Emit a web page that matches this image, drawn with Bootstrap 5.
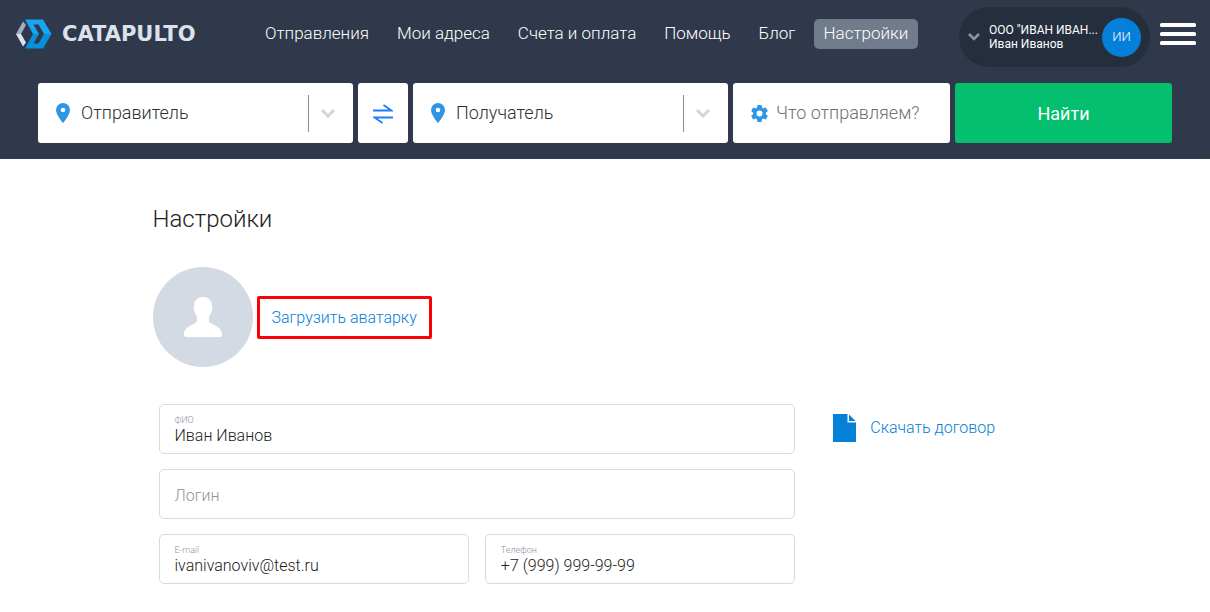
<!DOCTYPE html>
<html lang="ru">
<head>
<meta charset="utf-8">
<meta name="viewport" content="width=device-width, initial-scale=1">
<title>Настройки — Catapulto</title>
<link href="https://cdn.jsdelivr.net/npm/bootstrap@5.3.0/dist/css/bootstrap.min.css" rel="stylesheet">
<style>
  body { font-family: Roboto, "Noto Sans", sans-serif; font-weight: 300; color: #212121; background: #fff; }
  a { text-decoration: none; color: #0480d8; }
  .site-header { background: #2f394b; padding-bottom: 16px; }
  .top-bar { padding: 7px 14px 0 16px; min-height: 67px; }
  .brand { color: #dce2ec; font: 700 21px/24px "DejaVu Sans", sans-serif; gap: 10px; width: 191px; height: 53px; }
  .main-menu { gap: 8px; margin-left: 48px; height: 53px; }
  .main-menu .nav-link { color: #fff; font-size: 17px; line-height: 20px; padding: 4px 10px 6px; border-radius: 5px; white-space: nowrap; font-weight: 300; }
  .main-menu .nav-link.active { background: #707b8b; }
  .profile { background: #252e3d; color: #fff; height: 60px; border-radius: 30px; gap: 9px; padding: 0 9px; width: 191px; }
  .profile-name { font-size: 12px; line-height: 14px; font-weight: 400; min-width: 0; }
  .initials { background: #0480d8; width: 39px; height: 39px; border-radius: 50%; font-size: 13px; font-weight: 300; }
  .burger { width: 36px; height: 54px; margin-left: 10px; }
  .search-row { display: grid; grid-template-columns: minmax(0, 315fr) 50px minmax(0, 315fr) minmax(0, 217fr) minmax(0, 217fr); gap: 5px; margin: 16px 38px 0; }
  .search-box { background: #fff; height: 60px; border-radius: 3px; padding-left: 18px; gap: 11px; }
  .search-box input { font-size: 18px; line-height: 24px; font-weight: 300; border: 0; outline: 0; width: 0; min-width: 0; background: none; padding: 0; color: #212121; }
  .search-box input::placeholder { color: #303030; opacity: 1; }
  .search-box .parcel::placeholder { color: #707070; }
  .search-box.goods { gap: 8px; }
  .toggle-list { border: 0; border-left: 1px solid #8c8c8c; width: 45px; height: 37px; padding-left: 12px; }
  .swap { background: #fff; border-radius: 3px; }
  .find { background: #04bf6e; color: #fff; border-radius: 3px; font-size: 18px; }
  .page-body { max-width: 905px; margin: 0 auto; padding-top: 44px; }
  .page-title { font-size: 24px; line-height: 32px; font-weight: 300; }
  .avatar { width: 100px; height: 100px; border-radius: 50%; background: #d4dae4; }
  .upload { border: 3px solid #fb0007; border-radius: 2px; padding: 8px 12px; margin-left: 4px; font-size: 16px; line-height: 21px; }
  .settings { display: grid; grid-template-columns: minmax(0, 636fr) minmax(0, 224fr); gap: 38px; margin: 37px 0 28px; padding-left: 6px; }
  .fields { display: grid; grid-template-columns: 1fr 1fr; gap: 15px 16px; }
  .field-box { border: 1px solid #d4dae6; border-radius: 5px; height: 50px; padding: 10px 15px 0 15px; }
  .field-box label { display: block; font-size: 9px; line-height: 11px; color: #8d94a0; }
  .field-box input { display: block; width: 100%; border: 0; outline: 0; padding: 0; font-size: 16px; line-height: 20px; height: 20px; font-weight: 300; color: #212121; }
  .field-box input::placeholder { color: #8d94a0; opacity: 1; }
  .wide { grid-column: 1 / -1; }
  .lone { padding-top: 16px; }
  .contract { height: 48px; gap: 14px; font-size: 16px; }
</style>
</head>
<body>
<header class="site-header">
  <div class="top-bar d-flex align-items-start">
    <a class="brand d-flex align-items-center" href="#">
      <svg class="flex-shrink-0" width="36" height="30" viewBox="0 0 36 30" aria-hidden="true">
        <path d="M7 2.500L10 6 5 15H0z" fill="#a3adbd"/><path d="M0 15h5l5 8.500L7 27.500z" fill="#dce2ec"/>
        <path d="M9 .5h18L35.500 15H28L22.500 5.500h-5L23 15h-6z" fill="#16a5f2"/>
        <path d="M9 29.500h18L35.500 15H28l-5.500 9.500h-5L23 15h-6z" fill="#078fdb"/>
      </svg>
      <span>CATAPULTO</span>
    </a>
    <nav class="main-menu nav flex-nowrap align-items-center" aria-label="Главное меню">
      <a class="nav-link" href="#">Отправления</a>
      <a class="nav-link" href="#">Мои адреса</a>
      <a class="nav-link" href="#">Счета и оплата</a>
      <a class="nav-link" href="#">Помощь</a>
      <a class="nav-link" href="#">Блог</a>
      <a class="nav-link active" aria-current="page" href="#">Настройки</a>
    </nav>
    <button class="profile btn border-0 d-flex align-items-center ms-auto flex-shrink-0" type="button">
      <svg class="flex-shrink-0" width="12" height="8" viewBox="0 0 12 8" fill="none" stroke="#8f959f" stroke-width="2.500" aria-hidden="true"><path d="M1 1l5 5 5-5"/></svg>
      <span class="profile-name text-start text-nowrap flex-grow-1">ООО "ИВАН ИВАН...<br>Иван Иванов</span>
      <span class="initials d-flex align-items-center justify-content-center flex-shrink-0">ИИ</span>
    </button>
    <button class="burger btn border-0 p-0 flex-shrink-0 d-flex align-items-center" type="button" aria-label="Меню">
      <svg width="36" height="22" viewBox="0 0 36 22" fill="#fff" aria-hidden="true"><rect width="36" height="4" rx="1.500"/><rect y="9" width="36" height="4" rx="1.500"/><rect y="18" width="36" height="4" rx="1.500"/></svg>
    </button>
  </div>
  <form class="search-row">
    <div class="search-box d-flex align-items-center">
      <svg class="flex-shrink-0" width="14" height="20" viewBox="0 0 14 20" fill="#2f96e4" aria-hidden="true"><path fill-rule="evenodd" d="M7 0a7 7 0 0 0-7 7c0 5 7 13 7 13s7-8 7-13a7 7 0 0 0-7-7zm0 4.700a2.300 2.300 0 1 1 0 4.600 2.300 2.300 0 0 1 0-4.600z"/></svg>
      <input class="flex-grow-1" type="text" placeholder="Отправитель" aria-label="Отправитель">
      <button class="toggle-list bg-white d-flex align-items-center" type="button" aria-label="Список отправителей"><svg width="14" height="9" viewBox="0 0 14 9" fill="none" stroke="#cfd6de" stroke-width="3" aria-hidden="true"><path d="M1 1l6 6 6-6"/></svg></button>
    </div>
    <button class="swap btn border-0 p-0" type="button" aria-label="Поменять местами">
      <svg width="20" height="20" viewBox="0 0 20 20" fill="none" stroke="#1c7cff" stroke-width="1.800" aria-hidden="true"><path d="M0 6.500h18.500L10.500 1"/><path d="M20 13.500H1.500L9.500 19"/></svg>
    </button>
    <div class="search-box d-flex align-items-center">
      <svg class="flex-shrink-0" width="14" height="20" viewBox="0 0 14 20" fill="#2f96e4" aria-hidden="true"><path fill-rule="evenodd" d="M7 0a7 7 0 0 0-7 7c0 5 7 13 7 13s7-8 7-13a7 7 0 0 0-7-7zm0 4.700a2.300 2.300 0 1 1 0 4.600 2.300 2.300 0 0 1 0-4.600z"/></svg>
      <input class="flex-grow-1" type="text" placeholder="Получатель" aria-label="Получатель">
      <button class="toggle-list bg-white d-flex align-items-center" type="button" aria-label="Список получателей"><svg width="14" height="9" viewBox="0 0 14 9" fill="none" stroke="#cfd6de" stroke-width="3" aria-hidden="true"><path d="M1 1l6 6 6-6"/></svg></button>
    </div>
    <div class="search-box goods d-flex align-items-center">
      <svg class="flex-shrink-0" width="17" height="17" viewBox="2 2 20 20" fill="#2f96e4" aria-hidden="true"><path d="M19.430 12.980c.04-.32.07-.64.07-.98s-.03-.66-.07-.98l2.110-1.650c.19-.15.24-.42.12-.64l-2-3.460c-.12-.22-.39-.3-.61-.22l-2.490 1c-.52-.4-1.080-.73-1.690-.98l-.38-2.650C14.460 2.180 14.250 2 14 2h-4c-.25 0-.46.18-.49.42l-.38 2.650c-.61.25-1.170.59-1.690.98l-2.490-1c-.23-.09-.49 0-.61.22l-2 3.460c-.13.22-.07.49.12.64l2.110 1.650c-.04.32-.07.65-.07.98s.03.66.07.98l-2.110 1.650c-.19.15-.24.42-.12.64l2 3.460c.12.22.39.3.61.22l2.490-1c.52.4 1.080.73 1.690.98l.38 2.650c.03.24.24.42.49.42h4c.25 0 .46-.18.49-.42l.38-2.650c.61-.25 1.170-.59 1.690-.98l2.490 1c.23.09.49 0 .61-.22l2-3.460c.12-.22.07-.49-.12-.64l-2.110-1.650zM12 15.500a3.500 3.500 0 1 1 0-7 3.500 3.500 0 0 1 0 7z"/></svg>
      <input class="parcel flex-grow-1" type="text" placeholder="Что отправляем?" aria-label="Что отправляем?">
    </div>
    <button class="find btn border-0" type="submit">Найти</button>
  </form>
</header>
<main class="page-body">
  <h1 class="page-title mb-0">Настройки</h1>
  <div class="d-flex align-items-center mt-4 pt-2">
    <div class="avatar d-flex align-items-center justify-content-center">
      <svg width="40" height="40" viewBox="0 0 40 40" fill="#fff" aria-hidden="true"><path d="M20 0c6 0 9.500 4.500 9 10 .8.800.5 3-.6 4-.5 3-1.400 4.500-2.400 5.500V24c1 3.500 13 5 13 13.500 0 1.500-.5 2.500-2 2.500H3c-1.500 0-2-1-2-2.500C1 29 13 27.500 14 24v-4.500c-1-1-1.900-2.500-2.400-5.500-1.100-1-1.400-3.200-.6-4C10.500 4.500 14 0 20 0z"/></svg>
    </div>
    <a class="upload" href="#">Загрузить аватарку</a>
  </div>
  <div class="settings">
    <form class="fields">
      <div class="field-box wide"><label for="fio">ФИО</label><input id="fio" type="text" value="Иван Иванов"></div>
      <div class="field-box wide lone"><input type="text" placeholder="Логин" aria-label="Логин"></div>
      <div class="field-box"><label for="mail">E-mail</label><input id="mail" type="email" value="ivanivanoviv@test.ru"></div>
      <div class="field-box"><label for="tel">Телефон</label><input id="tel" type="tel" value="+7 (999) 999-99-99"></div>
    </form>
    <div>
      <a class="contract d-flex align-items-center" href="#">
        <svg width="23" height="28" viewBox="0 0 23 28" fill="#0480d8" aria-hidden="true"><path d="M0 0h14.500v8.500H23V28H0z"/><path d="M16 0.500V7h6.500z"/></svg>
        <span>Скачать договор</span>
      </a>
    </div>
  </div>
</main>
<script src="https://cdn.jsdelivr.net/npm/bootstrap@5.3.0/dist/js/bootstrap.bundle.min.js"></script>
</body>
</html>
